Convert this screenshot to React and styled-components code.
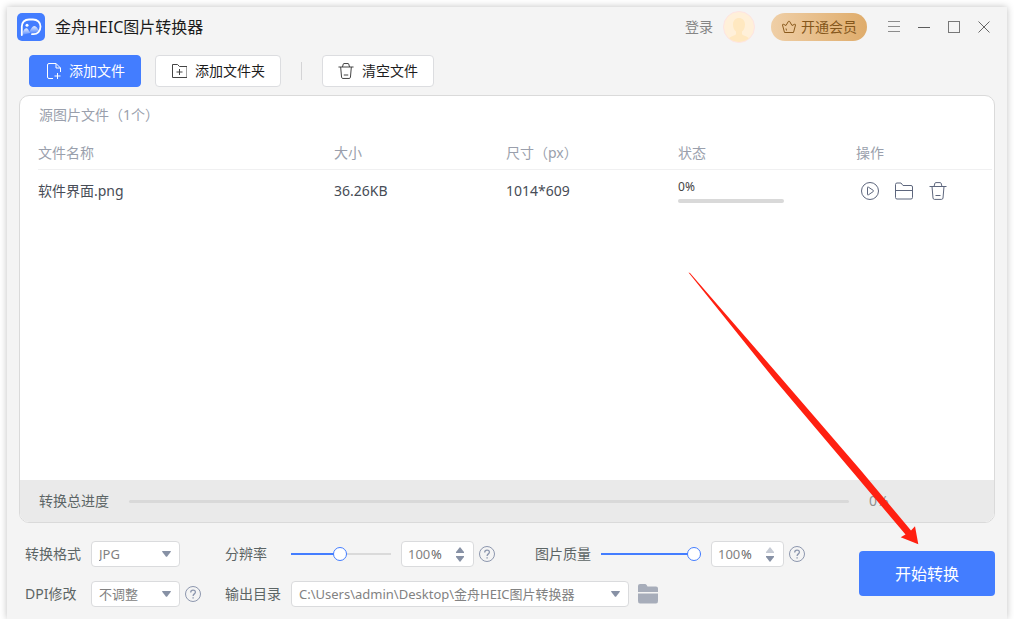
import { useState } from "react";
import styled, { createGlobalStyle } from "styled-components";

const files = [
  { name: "软件界面.png", size: "36.26KB", dimension: "1014*609", progress: 0 },
];

export default function App() {
  const [resolution, setResolution] = useState(49);
  const [quality, setQuality] = useState(100);
  return (
    <Page>
      <GlobalStyle />
      <Window>
        <TitleBar />
        <Toolbar />
        <FilePanel />
        <Settings>
          <Options>
            <Label htmlFor="format">转换格式</Label>
            <Field>
              <Select id="format" width={89} options={["JPG", "PNG"]} />
            </Field>
            <Label htmlFor="resolution">分辨率</Label>
            <Field>
              <Slider id="resolution" value={resolution} onChange={setResolution} />
              <Spinner label="分辨率百分比" />
              <Help />
              <QualityLabel htmlFor="quality">图片质量</QualityLabel>
              <Slider id="quality" value={quality} onChange={setQuality} />
              <Spinner label="图片质量百分比" atMax />
              <Help />
            </Field>
            <Label htmlFor="dpi">DPI修改</Label>
            <Field>
              <Select id="dpi" width={89} options={["不调整", "300"]} />
              <Help />
            </Field>
            <Label htmlFor="output">输出目录</Label>
            <Field>
              <Select
                id="output"
                width={338}
                options={["C:\\Users\\admin\\Desktop\\金舟HEIC图片转换器"]}
              />
              <BrowseButton type="button" aria-label="打开目录">
                <svg width="20" height="20" viewBox="0 0 20 20" fill="#a7adba">
                  <path d="M0 8V2Q0 0 2 0H7Q8 0 8.600 1L9.500 2.500H18Q20 2.500 20 4.500V8Z" />
                  <path d="M0 9.500H20V17Q20 19.500 18 19.500H2Q0 19.500 0 17Z" />
                </svg>
              </BrowseButton>
            </Field>
          </Options>
          <StartButton type="button">开始转换</StartButton>
        </Settings>
        <Pointer width="232" height="274" viewBox="0 0 232 274" aria-hidden="true">
          <path d="M0.500 0.500L2 1L93.500 106.500L172.500 198L223 258.500L227 254.300L230.300 272.300L212.700 265.300L217.500 262.500L163 198L86.500 107.500Z" />
        </Pointer>
      </Window>
    </Page>
  );
}

function TitleBar() {
  return (
    <Header>
      <svg width="28" height="28" viewBox="0 0 28 28" fill="none">
        <defs>
          <linearGradient id="hill" x1="0" y1="0" x2="0" y2="1">
            <stop offset="0" stopColor="#fff" stopOpacity=".85" />
            <stop offset="1" stopColor="#fff" stopOpacity=".1" />
          </linearGradient>
        </defs>
        <rect width="28" height="28" rx="5" fill="#437dff" />
        <path
          d="M4.800 22V13.500C4.800 9.500 7.500 6.500 12 6.500H16C20.500 6.500 23.500 9.500 23.500 13.500C23.500 18 20.500 21.200 16.500 21.200H15"
          stroke="#fff"
          strokeWidth="1.800"
          strokeLinecap="round"
        />
        <path d="M5 22C6 18 7.500 15.200 9.300 15.200C11.200 15.200 12 18 13 20Z" fill="url(#hill)" />
        <path d="M11.500 20C13.500 17 15 13 17.300 13C19.500 13 20.500 15.500 22 17.500L19 20Z" fill="url(#hill)" />
        <circle cx="10" cy="12.300" r="1.500" fill="#fff" />
      </svg>
      <Title>金舟HEIC图片转换器</Title>
      <Login href="#login">登录</Login>
      <svg width="32" height="32" viewBox="0 0 32 32">
        <defs>
          <clipPath id="face">
            <circle cx="16" cy="16" r="15" />
          </clipPath>
        </defs>
        <circle cx="16" cy="16" r="15.500" fill="#fff0d9" stroke="#fde4e2" />
        <g fill="#ffe8c0" clipPath="url(#face)">
          <path d="M10 13.500C10 9.500 12.500 7 16 7C19.500 7 22 9.500 22 13.500C22 17 20.500 19.500 19 20.500V23C19 24.500 25 25 26.500 28V32H5.500V28C7 25 13 24.500 13 23V20.500C11.500 19.500 10 17 10 13.500Z" />
        </g>
      </svg>
      <Member type="button">
        <svg width="16" height="16" viewBox="0 0 16 16" fill="none" stroke="#8a5a1c" strokeLinejoin="round">
          <path d="M3.500 13.500L1.500 6Q1.500 5 2.500 5.300L5 6.500L7.300 2.500Q8 1.500 8.700 2.500L11 6.500L13.500 5.300Q14.500 5 14.500 6L12.500 13.500Z" />
          <path d="M5 9.500L5.500 11.500" />
        </svg>
        开通会员
      </Member>
      <WindowButtons>
        <WindowButton type="button" aria-label="菜单">
          <svg width="12" height="12" viewBox="0 0 12 12" stroke="#8c8c8c">
            <path d="M0 .5H12M0 5.500H12M0 10.500H12" />
          </svg>
        </WindowButton>
        <WindowButton type="button" aria-label="最小化">
          <svg width="12" height="12" viewBox="0 0 12 12" stroke="#5c5c5c">
            <path d="M0 6.500H12" />
          </svg>
        </WindowButton>
        <WindowButton type="button" aria-label="最大化">
          <svg width="12" height="12" viewBox="0 0 12 12" fill="none" stroke="#777">
            <rect x=".5" y=".5" width="11" height="11" />
          </svg>
        </WindowButton>
        <WindowButton type="button" aria-label="关闭">
          <svg width="12" height="12" viewBox="0 0 12 12" stroke="#666">
            <path d="M.5 .5L11.500 11.500M11.500 .5L.5 11.500" />
          </svg>
        </WindowButton>
      </WindowButtons>
    </Header>
  );
}

function Toolbar() {
  return (
    <Tools>
      <ToolButton type="button" $primary>
        <svg width="16" height="16" viewBox="0 0 16 16" fill="none" stroke="#fff">
          <path d="M8 15.500H4Q2.500 15.500 2.500 14V2Q2.500 .5 4 .5H11L15.500 5V9M11 .5V5H15.500M12.500 10V16M9.500 13H15.500" />
        </svg>
        添加文件
      </ToolButton>
      <ToolButton type="button">
        <svg width="16" height="16" viewBox="0 0 16 16" fill="none" stroke="#444">
          <path d="M1.500 1.500H6.500L8.500 3.500H16V14.500H1.500V1.500M8.500 6V12M5.500 9H11.500" />
        </svg>
        添加文件夹
      </ToolButton>
      <Divider />
      <ToolButton type="button">
        <TrashIcon size={16} color="#444" />
        清空文件
      </ToolButton>
    </Tools>
  );
}

function FilePanel() {
  return (
    <Panel>
      <PanelTitle>源图片文件（{files.length}个）</PanelTitle>
      <TableArea>
        <Table>
          <thead>
            <tr>
              <Th>文件名称</Th>
              <Th $width={172}>大小</Th>
              <Th $width={172}>尺寸（px）</Th>
              <Th $width={178}>状态</Th>
              <Th $width={136}>操作</Th>
            </tr>
          </thead>
          <tbody>
            {files.map((file) => (
              <tr key={file.name}>
                <Td>{file.name}</Td>
                <Td>{file.size}</Td>
                <Td>{file.dimension}</Td>
                <Td>
                  <FileProgress>
                    {file.progress}%
                    <Track />
                  </FileProgress>
                </Td>
                <Td>
                  <Actions>
                    <IconButton type="button" aria-label="开始">
                      <svg width="18" height="18" viewBox="0 0 18 18" fill="none" stroke="#5d667d">
                        <circle cx="9" cy="9" r="8.500" />
                        <path d="M6.500 5.500Q6.500 4.600 7.300 5.100L12.200 8.300Q13 9 12.200 9.600L7.300 12.900Q6.500 13.300 6.500 12.500Z" />
                      </svg>
                    </IconButton>
                    <IconButton type="button" aria-label="打开文件夹">
                      <svg width="18" height="18" viewBox="0 0 18 18" fill="none" stroke="#5d667d">
                        <path d="M.5 2.500Q.5 1 2 1H6L8 3.500H16Q17.500 3.500 17.500 5V15.500Q17.500 17 16 17H2Q.5 17 .5 15.500ZM.5 8.500H17.500" />
                      </svg>
                    </IconButton>
                    <IconButton type="button" aria-label="删除">
                      <TrashIcon size={18} color="#5d667d" />
                    </IconButton>
                  </Actions>
                </Td>
              </tr>
            ))}
          </tbody>
        </Table>
      </TableArea>
      <TotalBar>
        转换总进度
        <Track $grow />
        <TotalValue>0%</TotalValue>
      </TotalBar>
    </Panel>
  );
}

function TrashIcon({ size, color }) {
  return (
    <svg width={size} height={size} viewBox="0 0 18 18" fill="none" stroke={color} strokeWidth={18 / size}>
      <path d="M.5 4.500H17.500M5 4.500L6 1Q6.200 .6 6.700 .6H11.300Q11.800 .6 12 1L13 4.500M3 4.500L4 16Q4.200 17.400 5.500 17.400H12.500Q13.800 17.400 14 16L15 4.500M6.500 13.500H11.500" />
    </svg>
  );
}

function Select({ id, width, options }) {
  return (
    <SelectBox $width={width}>
      <select id={id}>
        {options.map((option) => (
          <option key={option}>{option}</option>
        ))}
      </select>
      <svg width="9" height="6" viewBox="0 0 9 6" fill="#8791a5">
        <path d="M0 .5Q0 0 .6 0H8.400Q9 0 9 .5L5 5.700Q4.500 6 4 5.700Z" />
      </svg>
    </SelectBox>
  );
}

function Slider({ id, value, onChange }) {
  return (
    <Range
      id={id}
      type="range"
      value={value}
      onChange={(e) => onChange(Number(e.target.value))}
      $fill={value}
    />
  );
}

function Spinner({ label, atMax }) {
  return (
    <SpinBox>
      <input type="text" inputMode="numeric" defaultValue="100" aria-label={label} />
      <span>%</span>
      <Steps>
        <Step type="button" aria-label="增加" disabled={atMax}>
          <svg width="8" height="6" viewBox="0 0 8 6">
            <path d="M4 0L8 5V6H0V5Z" />
          </svg>
        </Step>
        <Step type="button" aria-label="减少">
          <svg width="8" height="6" viewBox="0 0 8 6">
            <path d="M4 6L8 1V0H0V1Z" />
          </svg>
        </Step>
      </Steps>
    </SpinBox>
  );
}

function Help() {
  return (
    <IconButton type="button" aria-label="帮助">
      <svg width="16" height="16" viewBox="0 0 16 16" fill="none" stroke="#8d97ae">
        <circle cx="8" cy="8" r="7.500" />
        <path d="M5.700 6.500C5.700 3.300 10.400 3.400 10.400 6.200C10.400 7.900 8.100 7.900 8.100 10" strokeWidth="1.300" />
        <path d="M8.100 11.200V12.600" strokeWidth="1.400" />
      </svg>
    </IconButton>
  );
}

const GlobalStyle = createGlobalStyle`
  * {
    box-sizing: border-box;
  }
  body {
    margin: 0;
    background: #fff;
    font: 14px/20px "Noto Sans", "Noto Sans CJK SC", sans-serif;
  }
  button, input, select {
    margin: 0;
    padding: 0;
    border: 0;
    background: none;
    font: inherit;
    color: inherit;
  }
  button {
    cursor: pointer;
  }
  svg {
    display: block;
    flex: none;
  }
`;

const Page = styled.div`
  display: flex;
  min-height: 100vh;
  padding: 7px 7px 0;
  overflow: hidden;
`;

const Window = styled.main`
  position: relative;
  display: flex;
  flex: 1;
  flex-direction: column;
  background: #f4f4f4;
  box-shadow: 0 0 7px rgba(0, 0, 0, 0.25);
`;

const Header = styled.header`
  display: flex;
  align-items: center;
  height: 40px;
  padding: 0 8px 0 10px;
`;

const Title = styled.h1`
  flex: 1;
  margin: 0 0 0 10px;
  font-size: 16px;
  font-weight: inherit;
  color: #1c1c1c;
`;

const Login = styled.a`
  margin-right: 10px;
  color: #858585;
  text-decoration: none;
`;

const Member = styled.button`
  display: flex;
  align-items: center;
  justify-content: center;
  gap: 4px;
  width: 96px;
  height: 28px;
  margin: 0 12px 0 16px;
  border-radius: 14px;
  background: linear-gradient(90deg, #efcfa7, #dfac6b);
  color: #85571c;
`;

const WindowButtons = styled.div`
  display: flex;
`;

const WindowButton = styled.button`
  display: flex;
  align-items: center;
  justify-content: center;
  width: 30px;
  height: 30px;
`;

const Tools = styled.div`
  display: flex;
  align-items: center;
  gap: 14px;
  padding: 8px 22px;
`;

const ToolButton = styled.button`
  display: flex;
  align-items: center;
  gap: 8px;
  height: 32px;
  padding: 0 15px;
  border: 1px solid ${(props) => (props.$primary ? "#437dff" : "#dcdde0")};
  border-radius: 4px;
  background: ${(props) => (props.$primary ? "#437dff" : "#fff")};
  color: ${(props) => (props.$primary ? "#fff" : "#1c1c1c")};
`;

const Divider = styled.span`
  width: 1px;
  height: 18px;
  margin: 0 6px;
  background: #d4d4d6;
`;

const Panel = styled.section`
  display: flex;
  flex: 1;
  flex-direction: column;
  margin: 0 12px;
  border: 1px solid #dadada;
  border-radius: 10px;
  background: #fff;
  overflow: hidden;
`;

const PanelTitle = styled.h2`
  margin: 0;
  padding: 9px 19px 11px;
  font-size: 14px;
  font-weight: inherit;
  color: #9a9fac;
`;

const TableArea = styled.div`
  flex: 1;
  padding: 0 2px 0 18px;
`;

const Table = styled.table`
  width: 100%;
  table-layout: fixed;
  border-collapse: separate;
  border-spacing: 0;
`;

const Th = styled.th`
  width: ${(props) => (props.$width ? `${props.$width}px` : "auto")};
  height: 34px;
  padding: 0;
  border-bottom: 1px solid #f0f0f1;
  font-weight: inherit;
  text-align: left;
  color: #9a9fac;
`;

const Td = styled.td`
  height: 42px;
  padding: 0;
  color: #474c56;
`;

const FileProgress = styled.div`
  display: flex;
  flex-direction: column;
  gap: 4px;
  width: 106px;
  font-size: 12px;
  line-height: 16px;
  color: #444;
`;

const Track = styled.div`
  flex: ${(props) => (props.$grow ? "1" : "none")};
  height: ${(props) => (props.$grow ? "3px" : "4px")};
  border-radius: 2px;
  background: #d9d9d9;
`;

const Actions = styled.div`
  display: flex;
  gap: 16px;
  padding-left: 5px;
`;

const IconButton = styled.button`
  display: flex;
  flex: none;
`;

const TotalBar = styled.div`
  display: flex;
  align-items: center;
  gap: 20px;
  height: 42px;
  padding: 0 18px 0 19px;
  background: #eaeaea;
  color: #5c6565;
`;

const TotalValue = styled.span`
  width: 107px;
  color: #909090;
`;

const Settings = styled.form`
  display: flex;
  justify-content: space-between;
  align-items: flex-start;
  padding: 18px 12px 12px 18px;
`;

const Options = styled.div`
  display: grid;
  grid-template-columns: 66px 134px 66px auto;
  row-gap: 14px;
  align-items: center;
  color: #5c6565;
`;

const Label = styled.label`
  white-space: nowrap;
`;

const QualityLabel = styled(Label)`
  width: 56px;
  margin: 0 5px 0 35px;
`;

const Field = styled.div`
  display: flex;
  align-items: center;
  gap: 5px;
`;

const SelectBox = styled.span`
  display: grid;
  align-items: center;
  width: ${(props) => props.$width}px;
  height: 26px;
  border: 1px solid #dadbdd;
  border-radius: 4px;
  background: #fff;
  font-size: 13px;
  color: #828282;

  select {
    grid-area: 1 / 1;
    width: 100%;
    height: 24px;
    padding: 0 20px 0 7px;
    appearance: none;
  }

  svg {
    grid-area: 1 / 1;
    justify-self: end;
    margin-right: 8px;
    pointer-events: none;
  }
`;

const Range = styled.input`
  width: 100px;
  height: 14px;
  margin-right: 5px;
  appearance: none;
  background: linear-gradient(
      90deg,
      #437dff ${(props) => props.$fill}%,
      #dadada ${(props) => props.$fill}%
    )
    center / 100% 2px no-repeat;

  &::-webkit-slider-thumb {
    width: 14px;
    height: 14px;
    border: 1px solid #437dff;
    border-radius: 50%;
    appearance: none;
    background: #fff;
  }
`;

const SpinBox = styled.span`
  display: flex;
  align-items: center;
  width: 73px;
  height: 26px;
  padding: 0 9px 0 6px;
  border: 1px solid #dadbdd;
  border-radius: 4px;
  background: #fff;
  font-size: 13px;
  color: #666;

  input {
    width: 23px;
    color: #828282;
  }
`;

const Steps = styled.span`
  display: flex;
  flex-direction: column;
  gap: 3px;
  margin-left: auto;
`;

const Step = styled.button`
  display: flex;
  fill: #8791a5;

  &:disabled {
    fill: #c5cad4;
  }
`;

const BrowseButton = styled(IconButton)`
  margin-left: 4px;
`;

const StartButton = styled.button`
  width: 136px;
  height: 45px;
  margin-top: 10px;
  border-radius: 4px;
  background: #437dff;
  font-size: 16px;
  color: #fff;
`;

const Pointer = styled.svg`
  position: absolute;
  right: 87px;
  bottom: 73px;
  fill: #ff2011;
  pointer-events: none;
`;
